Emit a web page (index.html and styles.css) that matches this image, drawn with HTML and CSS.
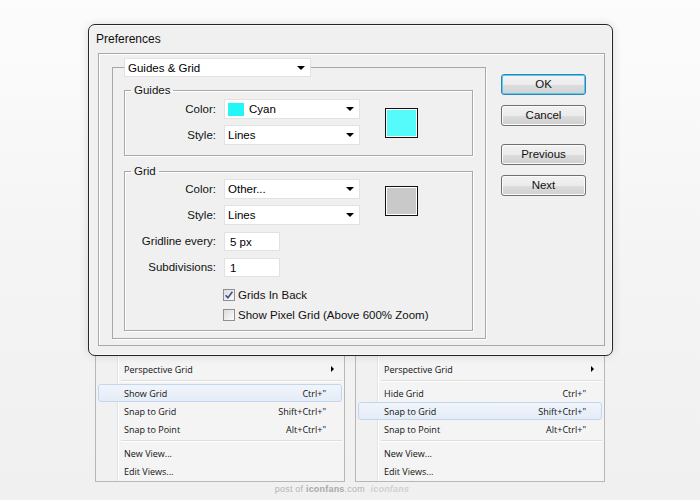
FILE: index.html
```html
<!DOCTYPE html>
<html lang="en">
<head>
    <meta charset="UTF-8">
    <title>Preferences - Guides &amp; Grid</title>
    <link rel="stylesheet" href="styles.css">
</head>
<body>
    <div class="stage">
        <div class="dialog">
            <div class="dialog-title">Preferences</div>
            <div class="panel">
                <fieldset class="group">
                    <legend class="group-legend"><div class="select select-head">Guides &amp; Grid<span class="caret"></span></div></legend>
                    <div class="group-body">
                        <fieldset class="box">
                            <legend>Guides</legend>
                            <div class="box-body box-guides">
                                <div class="rows">
                                    <div class="row"><span class="lbl">Color:</span><div class="select"><span class="chip chip-cyan"></span>Cyan<span class="caret"></span></div></div>
                                    <div class="row"><span class="lbl">Style:</span><div class="select">Lines<span class="caret"></span></div></div>
                                </div>
                                <div class="swatch swatch-cyan"></div>
                            </div>
                        </fieldset>

                        <fieldset class="box box-grid">
                            <legend>Grid</legend>
                            <div class="box-body">
                                <div class="top-rows">
                                    <div class="rows">
                                        <div class="row"><span class="lbl">Color:</span><div class="select">Other...<span class="caret"></span></div></div>
                                        <div class="row"><span class="lbl">Style:</span><div class="select">Lines<span class="caret"></span></div></div>
                                        <div class="row"><span class="lbl">Gridline every:</span><div class="field">5 px</div></div>
                                        <div class="row"><span class="lbl">Subdivisions:</span><div class="field">1</div></div>
                                    </div>
                                    <div class="swatch swatch-gray"></div>
                                </div>
                                <div class="checks">
                                    <div class="check"><span class="cb"><svg width="12" height="12" viewBox="0 0 12 12"><path d="M2.6 6.2 L4.9 8.8 L9.4 2.8" fill="none" stroke="#3d4f8c" stroke-width="1.6"/></svg></span>Grids In Back</div>
                                    <div class="check"><span class="cb"></span>Show Pixel Grid (Above 600% Zoom)</div>
                                </div>
                            </div>
                        </fieldset>
                    </div>
                </fieldset>

                <div class="buttons">
                    <div class="btn btn-default">OK</div>
                    <div class="btn">Cancel</div>
                    <div class="btn btn-gap">Previous</div>
                    <div class="btn">Next</div>
                </div>
            </div>
        </div>

        <div class="menus">
            <div class="menu">
                <div class="item item-sub">Perspective Grid<span class="arrow"></span></div>
                <div class="sep"></div>
                <div class="item hover">Show Grid<span class="key">Ctrl+"</span></div>
                <div class="item">Snap to Grid<span class="key">Shift+Ctrl+"</span></div>
                <div class="item">Snap to Point<span class="key">Alt+Ctrl+"</span></div>
                <div class="sep"></div>
                <div class="item">New View...</div>
                <div class="item">Edit Views...</div>
            </div>
            <div class="menu">
                <div class="item item-sub">Perspective Grid<span class="arrow"></span></div>
                <div class="sep"></div>
                <div class="item">Hide Grid<span class="key">Ctrl+"</span></div>
                <div class="item hover">Snap to Grid<span class="key">Shift+Ctrl+"</span></div>
                <div class="item">Snap to Point<span class="key">Alt+Ctrl+"</span></div>
                <div class="sep"></div>
                <div class="item">New View...</div>
                <div class="item">Edit Views...</div>
            </div>
        </div>

        <div class="credit">post of <b>iconfans</b>.com <i class="credit-logo">iconfans</i></div>
    </div>
</body>
</html>
```

FILE: styles.css
```css
body { margin: 0; font-family: "Liberation Sans", Arial, sans-serif; font-size: 11.5px; color: #000; }
.stage { width: 700px; height: 500px; overflow: hidden; box-sizing: border-box; padding-top: 24px; background: linear-gradient(#fcfcfc, #f3f3f3 60%, #f0f0f0); }

/* dialog */
.dialog { width: 525px; height: 332px; margin-left: 88px; box-sizing: border-box; border: 1px solid #262626; border-radius: 7px; background: #f0f0f0; box-shadow: 0 0 10px rgba(0, 0, 0, 0.12), inset 0 0 0 1px #fafafa; position: relative; z-index: 1; }
.dialog-title { height: 28px; line-height: 29px; padding-left: 7px; font-size: 12px; color: #111; }
.panel { display: flex; align-items: flex-start; height: 293px; margin: 0 7px 0 9px; box-sizing: border-box; border: 1px solid #a9a9a9; box-shadow: inset 1px 1px 0 #fff; padding: 4px 0 0 13px; }

fieldset { margin: 0; padding: 0; min-width: 0; }
.group { width: 374px; box-sizing: border-box; border: 1px solid #a8a8a8; box-shadow: 1px 1px 0 #fff; }
.group-legend { padding: 0; margin-left: 11px; }
.group-body { padding: 6px 12px 7px 11px; }

.box { border: 1px solid #a8a8a8; box-shadow: 1px 1px 0 #fff, inset 1px 1px 0 #fff; }
.box legend { margin-left: 6px; padding: 0 3px; line-height: 14px; color: #111; }
.box-grid { margin-top: 8px; }
.box-body { padding: 2px 0 10px 0; }
.box-grid .box-body { padding: 1px 0 8px 0; }
.box-guides, .top-rows { display: flex; align-items: flex-start; }

.rows { display: flex; flex-direction: column; gap: 6px; }
.row { display: flex; align-items: center; height: 20px; }
.lbl { width: 91px; text-align: right; margin-right: 8px; color: #111; }

.select { position: relative; display: flex; align-items: center; width: 136px; height: 20px; box-sizing: border-box; padding-left: 3px; background: #fff; border: 1px solid #e2e2e2; }
.select-head { width: 187px; height: 19px; padding-left: 3px; }
.caret { position: absolute; right: 5px; top: 7px; width: 0; height: 0; border-top: 4px solid #000; border-left: 4px solid transparent; border-right: 4px solid transparent; }
.chip { width: 16px; height: 13px; margin-right: 5px; }
.chip-cyan { background: #22f6f6; }
.field { width: 56px; height: 19px; line-height: 19px; box-sizing: border-box; padding-left: 5px; background: #fff; border: 1px solid #e2e2e2; }

.swatch { width: 33px; height: 30px; box-sizing: border-box; border: 1px solid #111; box-shadow: inset 0 0 0 1px #fff; margin-left: 25px; }
.swatch-cyan { background: #55fbfb; margin-top: 9px; }
.swatch-gray { background: #c9c9c9; margin-top: 7px; }

.checks { display: flex; flex-direction: column; gap: 6px; margin-top: 11px; padding-left: 98px; }
.check { display: flex; align-items: center; height: 14px; color: #111; }
.cb { width: 12px; height: 12px; box-sizing: border-box; border: 1px solid #8e8f8f; background: linear-gradient(135deg, #dcdcdc, #fcfcfc); margin-right: 3px; display: flex; align-items: center; justify-content: center; }
.cb svg { flex: none; }

/* buttons */
.buttons { display: flex; flex-direction: column; width: 85px; margin: 16px 0 0 15px; gap: 10px; }
.btn { height: 21px; line-height: 19px; box-sizing: border-box; text-align: center; border: 1px solid #707070; border-radius: 3px; background: linear-gradient(#f2f2f2, #ebebeb 50%, #dddddd 51%, #cfcfcf); box-shadow: inset 0 0 0 1px #fbfbfb; color: #111; }
.btn-default { border-color: #3c7fb1; box-shadow: inset 0 0 0 1px #48d0f6; background: linear-gradient(#f3f3f3, #ececec 50%, #dedede 51%, #d2d2d2); }
.btn-gap { margin-top: 8px; }

/* context menus */
.menus { display: flex; gap: 10px; margin-left: 95px; }
.menu { width: 250px; height: 126px; box-sizing: border-box; padding-top: 4px; border: 1px solid #b7b7b7; border-top: none; font-family: "Open Sans", "Liberation Sans", sans-serif; font-size: 9px; color: #111;
    background: linear-gradient(to right, #f1f1f1 21px, #e2e3e3 21px, #e2e3e3 22px, #ffffff 22px, #ffffff 23px, #f4f4f4 23px); }
.item { display: flex; justify-content: space-between; align-items: center; height: 18px; box-sizing: border-box; margin: 0 2px; padding: 0 15px 0 25px; border: 1px solid transparent; border-radius: 3px; }
.item-sub { padding-right: 7px; }
.hover { border-color: #c3d6ee; background: linear-gradient(#f1f5fb, #e4ecf7); }
.arrow { width: 0; height: 0; border-left: 3px solid #000; border-top: 3px solid transparent; border-bottom: 3px solid transparent; }
.sep { height: 1px; margin: 2px 2px 2px 25px; background: #dedede; border-bottom: 1px solid #fff; }

.credit { margin-top: 2px; padding-right: 16px; text-align: center; font-size: 9px; color: #b4b4b4; letter-spacing: 0.2px; }
.credit b { color: #a9a9a9; }
.credit-logo { color: #d0d0d0; font-weight: bold; margin-left: 3px; }
```
